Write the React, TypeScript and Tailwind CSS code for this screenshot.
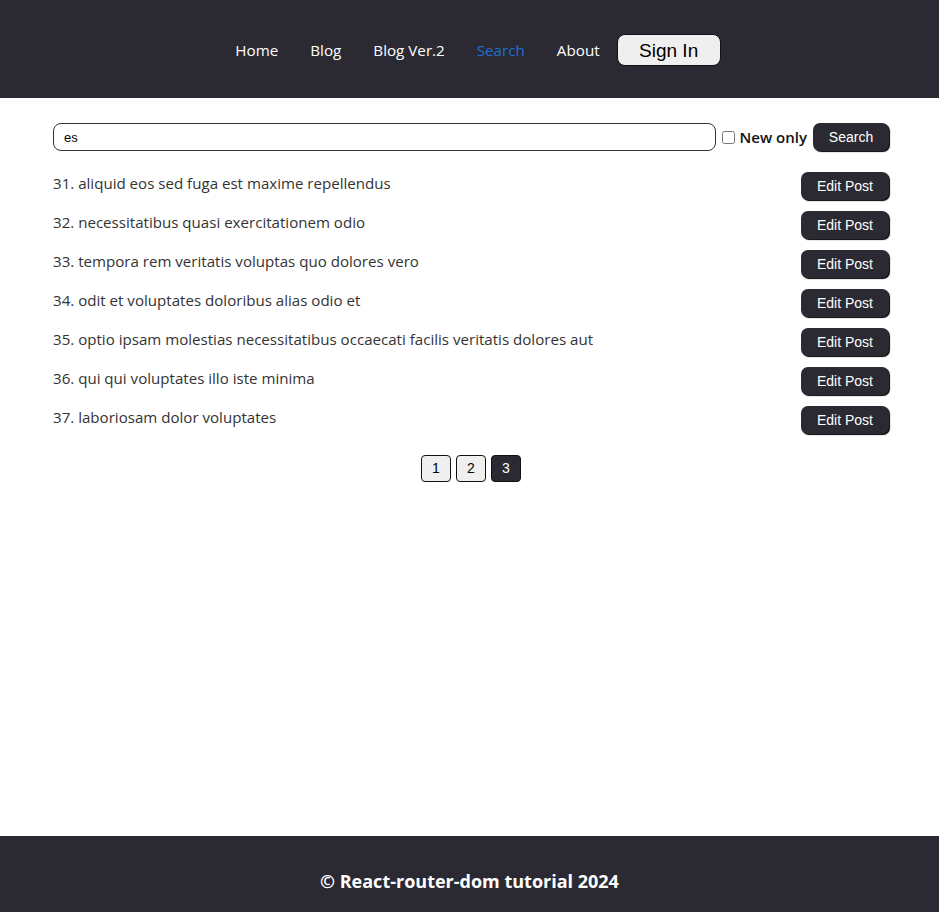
import React from "react";

const posts = [
  "31. aliquid eos sed fuga est maxime repellendus",
  "32. necessitatibus quasi exercitationem odio",
  "33. tempora rem veritatis voluptas quo dolores vero",
  "34. odit et voluptates doloribus alias odio et",
  "35. optio ipsam molestias necessitatibus occaecati facilis veritatis dolores aut",
  "36. qui qui voluptates illo iste minima",
  "37. laboriosam dolor voluptates",
];

const seg = { fontFamily: '"Open Sans", "Noto Sans", sans-serif' };
const arial = { fontFamily: '"Liberation Sans", Arial, sans-serif' };

export default function App() {
  return (
    <div className="min-h-[912px] flex flex-col bg-white" style={seg}>
      <header className="h-[98px] pt-[2px] bg-[#2b2a33] flex items-center justify-center">
        <nav className="flex items-center gap-[32px] text-[15.2px] text-white pl-[17px]">
          <span>Home</span>
          <span>Blog</span>
          <span>Blog Ver.2</span>
          <span className="text-[#1f6fd0]">Search</span>
          <span>About</span>
          <button
            className="-ml-[15px] w-[104px] h-[32px] rounded-[8px] border border-[#111] bg-[#efefef] text-black text-[19px] leading-none"
            style={arial}
          >
            Sign In
          </button>
        </nav>
      </header>

      <main className="flex-1 pl-[53px] pr-[50px] pt-[25px]">
        <div className="flex items-center h-[28px]">
          <input
            className="flex-1 h-[28px] rounded-[8px] border border-[#333] px-[10px] text-[13px] text-black outline-none"
            style={arial}
            defaultValue="es"
          />
          <input type="checkbox" className="ml-[6px] w-[13px] h-[13px]" />
          <span className="ml-[5px] text-[15px] font-semibold text-[#111] mt-[1px]">New only</span>
          <button
            className="ml-[6px] w-[76px] h-[28px] rounded-[7px] bg-[#2b2a33] text-white text-[14px] shadow-[1px_1px_1px_#000]"
            style={arial}
          >
            Search
          </button>
        </div>

        <ul className="mt-[21px] flex flex-col gap-[11px]">
          {posts.map((p) => (
            <li key={p} className="flex items-center justify-between h-[28px]">
              <span className="text-[15.1px] text-[#333] -mt-[6px]">{p}</span>
              <button
                className="w-[88px] h-[28px] rounded-[7px] bg-[#2b2a33] text-white text-[14px] shadow-[1px_1px_1px_#000]"
                style={arial}
              >
                Edit Post
              </button>
            </li>
          ))}
        </ul>

        <div className="mt-[21px] flex justify-center gap-[5px]">
          {[1, 2, 3].map((n) => (
            <button
              key={n}
              className={
                n === 3
                  ? "w-[30px] h-[27px] rounded-[4px] border border-[#111] bg-[#2b2a33] text-white text-[14px]"
                  : "w-[30px] h-[27px] rounded-[4px] border border-[#111] bg-[#efefef] text-black text-[14px]"
              }
              style={arial}
            >
              {n}
            </button>
          ))}
        </div>
      </main>

      <footer className="h-[76px] pt-[14px] bg-[#2b2a33] flex items-center justify-center">
        <span className="text-white text-[18px] font-bold">© React-router-dom tutorial 2024</span>
      </footer>
    </div>
  );
}
